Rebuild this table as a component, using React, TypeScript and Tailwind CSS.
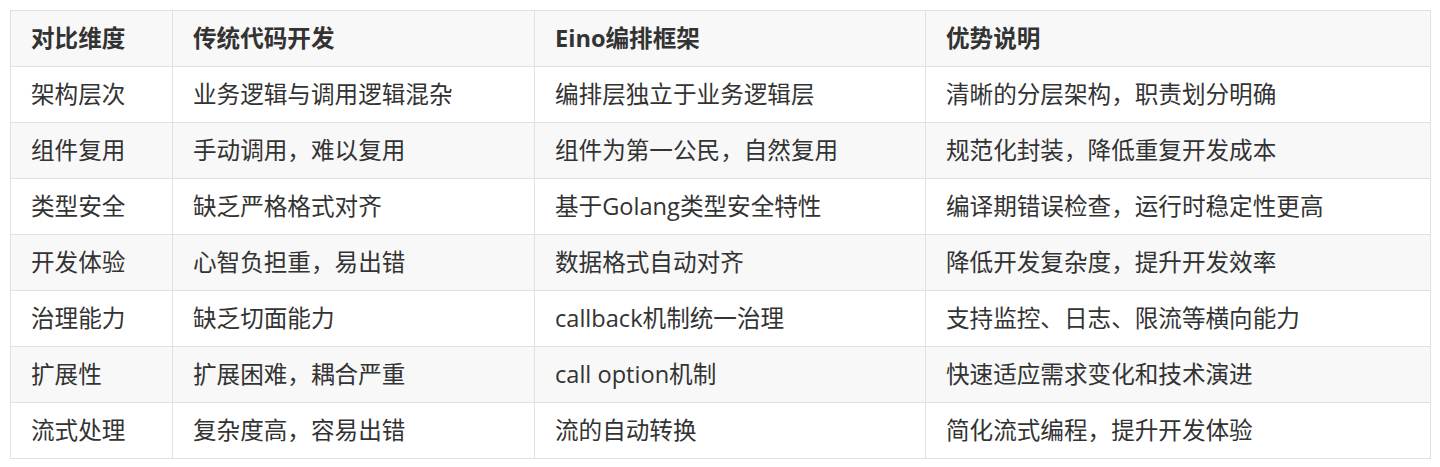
const header = ['对比维度', '传统代码开发', 'Eino编排框架', '优势说明']

const rows = [
  ['架构层次', '业务逻辑与调用逻辑混杂', '编排层独立于业务逻辑层', '清晰的分层架构，职责划分明确'],
  ['组件复用', '手动调用，难以复用', '组件为第一公民，自然复用', '规范化封装，降低重复开发成本'],
  ['类型安全', '缺乏严格格式对齐', '基于Golang类型安全特性', '编译期错误检查，运行时稳定性更高'],
  ['开发体验', '心智负担重，易出错', '数据格式自动对齐', '降低开发复杂度，提升开发效率'],
  ['治理能力', '缺乏切面能力', 'callback机制统一治理', '支持监控、日志、限流等横向能力'],
  ['扩展性', '扩展困难，耦合严重', 'call option机制', '快速适应需求变化和技术演进'],
  ['流式处理', '复杂度高，容易出错', '流的自动转换', '简化流式编程，提升开发体验'],
]

const widths = ['w-[162px]', 'w-[362px]', 'w-[391px]', 'w-[505px]']

export default function App() {
  return (
    <div
      className="bg-white p-[10px] text-[#333] text-[23.6px]"
      style={{ fontFamily: '"Open Sans", "Noto Sans CJK SC", sans-serif' }}
    >
      <table className="w-[1420px] border-collapse table-fixed">
        <thead>
          <tr className="bg-[#f8f8f8]">
            {header.map((h, i) => (
              <th
                key={i}
                className={`${widths[i]} h-[56px] border border-[#dfe2e5] px-[20px] text-left font-bold`}
              >
                {h}
              </th>
            ))}
          </tr>
        </thead>
        <tbody>
          {rows.map((row, r) => (
            <tr key={r} className={r % 2 === 1 ? 'bg-[#f8f8f8]' : 'bg-white'}>
              {row.map((cell, i) => (
                <td key={i} className="h-[56px] border border-[#dfe2e5] px-[20px] text-left">
                  {cell}
                </td>
              ))}
            </tr>
          ))}
        </tbody>
      </table>
    </div>
  )
}
